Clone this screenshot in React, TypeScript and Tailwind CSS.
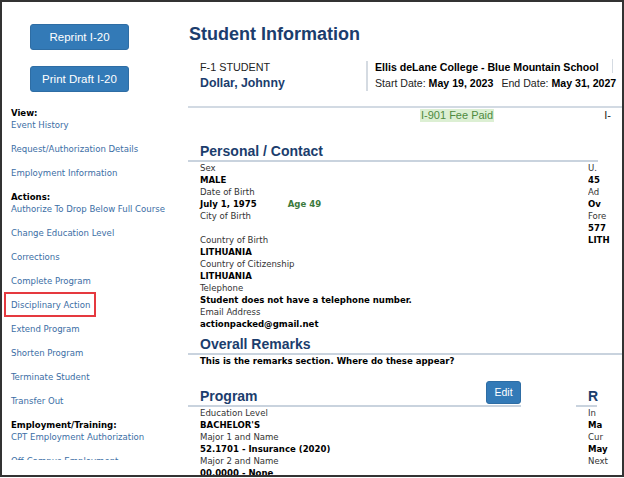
const tah = "font-['DejaVu_Sans_Condensed','DejaVu_Sans',sans-serif]";
const ari = "font-['Liberation_Sans',Arial,sans-serif]";

function SideLink({ label }: { label: string }) {
  return <div className="h-[12px] mb-[12px] text-[#3b6ea5] whitespace-nowrap">{label}</div>;
}

function SideHead({ label }: { label: string }) {
  return <div className="h-[12px] font-bold text-black whitespace-nowrap">{label}</div>;
}

function Row({ label, value, extra }: { label: string; value?: string; extra?: string }) {
  return (
    <>
      <div className="h-[12px] text-[#333] whitespace-nowrap">{label}</div>
      {value !== undefined && (
        <div className="h-[12px] font-bold text-black whitespace-nowrap">
          {value}
          {extra && <span className="ml-[31px] text-[#3c7a3c]">{extra}</span>}
        </div>
      )}
    </>
  );
}

export default function App() {
  return (
    <div className="w-[624px] h-[477px] border-2 border-[#333] bg-white overflow-hidden flex">
      {/* sidebar */}
      <div className={`w-[186px] h-[458px] shrink-0 overflow-hidden ${tah} text-[9.5px] leading-[12px]`}>
        <div className="pl-[28px] pt-[22px] flex flex-col gap-[16px]">
          <button className={`${ari} w-[99px] h-[26px] rounded-[3px] bg-[#337ab7] border border-[#2e6da4] text-white text-[11.5px]`}>
            Reprint I-20
          </button>
          <button className={`${ari} w-[99px] h-[26px] rounded-[3px] bg-[#337ab7] border border-[#2e6da4] text-white text-[11.5px]`}>
            Print Draft I-20
          </button>
        </div>
        <div className="pl-[9px] mt-[15px]">
          <SideHead label="View:" />
          <SideLink label="Event History" />
          <SideLink label="Request/Authorization Details" />
          <SideLink label="Employment Information" />
          <SideHead label="Actions:" />
          <SideLink label="Authorize To Drop Below Full Course" />
          <SideLink label="Change Education Level" />
          <SideLink label="Corrections" />
          <SideLink label="Complete Program" />
          <div className="relative">
            <div className="absolute left-[-7px] top-[-7px] w-[92px] h-[25px] border-2 border-[#e5393f]" />
            <SideLink label="Disciplinary Action" />
          </div>
          <SideLink label="Extend Program" />
          <SideLink label="Shorten Program" />
          <SideLink label="Terminate Student" />
          <SideLink label="Transfer Out" />
          <SideHead label="Employment/Training:" />
          <SideLink label="CPT Employment Authorization" />
          <SideLink label="Off-Campus Employment" />
        </div>
      </div>

      {/* main */}
      <div className="flex-1 min-w-0 overflow-hidden pt-[21px]">
        <h1 className={`${ari} text-[18px] leading-[22px] font-bold text-[#1b3d6d] pl-[1px] whitespace-nowrap`}>
          Student Information
        </h1>

        <div className={`${ari} flex items-start mt-[16px] whitespace-nowrap`}>
          <div className="w-[178px] pl-[12px]">
            <div className="text-[10.8px] leading-[13px] text-[#222]">F-1 STUDENT</div>
            <div className="text-[12.3px] leading-[15px] font-bold text-[#1b3d6d] mt-[2px]">Dollar, Johnny</div>
          </div>
          <div className="w-[2px] h-[30px] bg-[#d5dbe2]" />
          <div className="pl-[7px] w-[244px]">
            <div className="text-[10.6px] leading-[13px] font-bold text-black">Ellis deLane College - Blue Mountain School</div>
            <div className="text-[10.6px] leading-[13px] text-[#222] mt-[3px]">
              Start Date: <b className="text-black">May 19, 2023</b>
              <span className="ml-[8px]">End Date: </span>
              <b className="text-black">May 31, 2027</b>
            </div>
          </div>
          <div className="w-[1px] h-[14px] mt-[-2px] bg-[#d5dbe2]" />
        </div>

        <div className="h-[2px] bg-[#d2dae3] mt-[15px]" />

        <div className={`${ari} flex text-[11px] leading-[13px] mt-[1px] whitespace-nowrap`}>
          <span className="ml-[232px] bg-[#dcefd3] text-[#4e8a3e] px-[1px]">I-901 Fee Paid</span>
          <span className="ml-[110px] text-[#222]">I-</span>
        </div>

        {/* personal */}
        <h2 className={`${ari} text-[14px] leading-[17px] font-bold text-[#1b3d6d] pl-[12px] mt-[21px] whitespace-nowrap`}>
          Personal / Contact
        </h2>
        <div className="w-[410px] h-[2px] bg-[#c9d3de]" />
        <div className={`${tah} flex text-[9.5px] leading-[12px]`}>
          <div className="w-[400px] shrink-0 pl-[12px]">
            <Row label="Sex" value="MALE" />
            <Row label="Date of Birth" value="July 1, 1975" extra="Age 49" />
            <Row label="City of Birth" value="" />
            <Row label="Country of Birth" value="LITHUANIA" />
            <Row label="Country of Citizenship" value="LITHUANIA" />
            <Row label="Telephone" value="Student does not have a telephone number." />
            <Row label="Email Address" value="actionpacked@gmail.net" />
          </div>
          <div className="overflow-hidden w-[26px]">
            <Row label="U." value="45" />
            <Row label="Ad" value="Ov" />
            <Row label="Fore" value="577" />
            <div className="h-[12px] font-bold whitespace-nowrap">LITH</div>
          </div>
        </div>

        {/* remarks */}
        <h2 className={`${ari} text-[14px] leading-[17px] font-bold text-[#1b3d6d] pl-[12px] mt-[6px] whitespace-nowrap`}>
          Overall Remarks
        </h2>
        <div className="h-[2px] bg-[#c9d3de]" />
        <div className={`${tah} text-[9.5px] leading-[12px] font-bold text-black pl-[12px] whitespace-nowrap`}>
          This is the remarks section. Where do these appear?
        </div>

        {/* program */}
        <div className="flex mt-[14px]">
          <div className="w-[333px] shrink-0">
            <div className="flex items-end justify-between pl-[12px] h-[24px]">
              <h2 className={`${ari} text-[14px] leading-[17px] font-bold text-[#1b3d6d]`}>Program</h2>
              <button className={`${ari} w-[35px] h-[23px] mb-[1px] rounded-[3px] bg-[#337ab7] border border-[#2e6da4] text-white text-[10.5px]`}>
                Edit
              </button>
            </div>
            <div className="h-[2px] bg-[#c9d3de]" />
            <div className={`${tah} text-[9.5px] leading-[12px] pl-[12px]`}>
              <Row label="Education Level" value="BACHELOR'S" />
              <Row label="Major 1 and Name" value="52.1701 - Insurance (2020)" />
              <Row label="Major 2 and Name" value="00.0000 - None" />
            </div>
          </div>
          <div className="ml-[55px] w-[21px]">
            <div className="flex items-end pl-[12px] h-[24px]">
              <h2 className={`${ari} text-[14px] leading-[17px] font-bold text-[#1b3d6d]`}>R</h2>
            </div>
            <div className="h-[2px] bg-[#c9d3de]" />
            <div className={`${tah} text-[9.5px] leading-[12px] pl-[12px]`}>
              <Row label="In" value="Ma" />
              <Row label="Cur" value="May" />
              <div className="h-[12px] text-[#333]">Next</div>
            </div>
          </div>
        </div>
      </div>
    </div>
  );
}
